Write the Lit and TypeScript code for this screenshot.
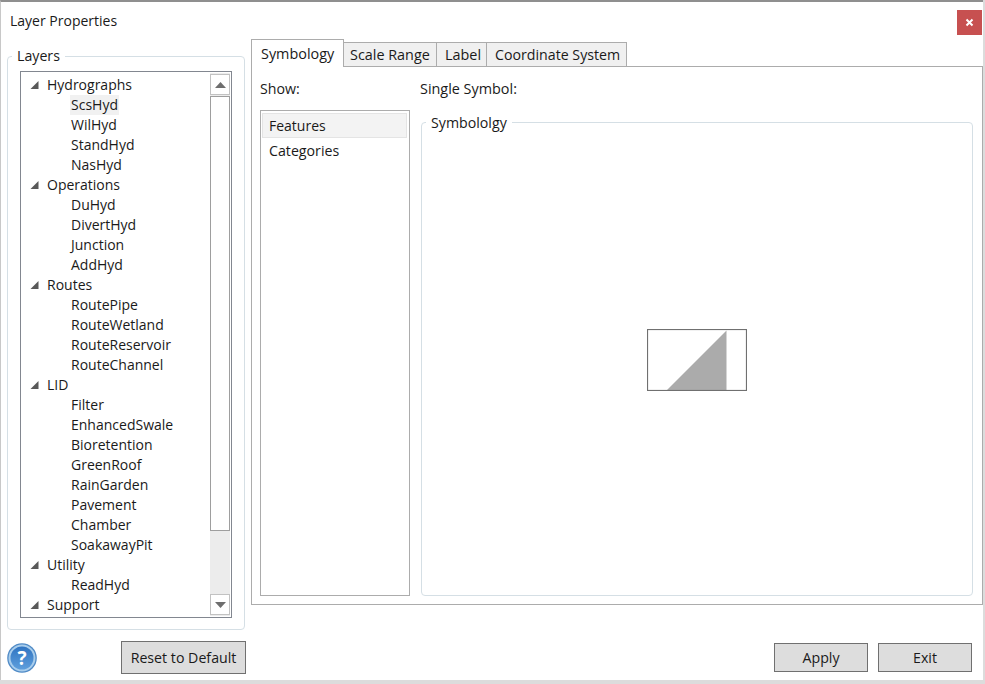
import { LitElement, html, css } from "lit";
import { customElement } from "lit/decorators.js";

const TREE: [string, string[]][] = [
  ["Hydrographs", ["ScsHyd", "WilHyd", "StandHyd", "NasHyd"]],
  ["Operations", ["DuHyd", "DivertHyd", "Junction", "AddHyd"]],
  ["Routes", ["RoutePipe", "RouteWetland", "RouteReservoir", "RouteChannel"]],
  ["LID", ["Filter", "EnhancedSwale", "Bioretention", "GreenRoof", "RainGarden", "Pavement", "Chamber", "SoakawayPit"]],
  ["Utility", ["ReadHyd"]],
  ["Support", []],
];

@customElement("app-root")
export class AppRoot extends LitElement {
  static styles = css`
    :host {
      display: block;
      width: 985px;
      height: 684px;
      overflow: hidden;
      background: #dcdcdc;
      font-family: "Open Sans", "Noto Sans", sans-serif;
      font-size: 14.2px;
      color: #1a1a1a;
    }
    * { box-sizing: border-box; }
    .win {
      width: 983px;
      height: 680px;
      background: #fff;
      border-top: 2px solid #8f8f8f;
      border-left: 1px solid #c8c8c8;
      display: flex;
      flex-direction: column;
    }
    .title {
      height: 38px;
      display: flex;
      justify-content: space-between;
      align-items: flex-start;
      padding-left: 9px;
      line-height: 20px;
      flex: none;
    }
    .title span { margin-top: 9px; font-size: 14px; }
    .close {
      width: 25px;
      height: 25px;
      margin-top: 8px;
      margin-right: 1px;
      background: #c75050;
      display: flex;
      align-items: center;
      justify-content: center;
    }
    .body {
      display: flex;
      height: 590px;
      flex: none;
    }
    fieldset {
      margin: 0;
      border: 1px solid #d5dfe5;
      border-radius: 4px;
      min-width: 0;
    }
    legend {
      padding: 0 5px;
      line-height: 20px;
      margin-left: 4px;
    }
    .layers {
      width: 238px;
      height: 584px;
      margin: 6px 0 0 6px;
      padding: 0 12px 11px 12px;
      flex: none;
    }
    .layers legend { margin-left: -8px; }
    .tree {
      height: 547px;
      border: 1px solid #828790;
      display: flex;
      padding: 1px;
      margin-top: 5px;
      font-size: 14px;
    }
    .items { flex: 1; padding: 2px 0 0 0; overflow: hidden; }
    .node {
      height: 20px;
      line-height: 20px;
      display: flex;
      align-items: center;
      padding-left: 8px;
    }
    .node .arrow {
      width: 9px; height: 9px; margin-right: 8px; flex: none; display: block;
    }
    .leaf { height: 20px; line-height: 20px; padding-left: 48px; }
    .leaf span { display: inline-block; padding: 0 1px; height: 20px; }
    .leaf.sel span { background: #f1f1f1; }
    .sb {
      width: 20px;
      background: #ececec;
      display: flex;
      flex-direction: column;
      flex: none;
      padding: 1px 0;
    }
    .sb-btn {
      height: 21px;
      background: #fff;
      border: 1px solid #c2c2c2;
      display: flex;
      align-items: center;
      justify-content: center;
      flex: none;
    }
    .thumb {
      height: 435px;
      background: #fff;
      border: 1px solid #9e9e9e;
      margin-top: 1px;
      flex: none;
    }
    .sb-fill { flex: 1; }
    .right {
      width: 732px;
      margin-left: 6px;
      margin-top: -1px;
      flex: none;
      display: flex;
      flex-direction: column;
    }
    .tabs { display: flex; height: 27px; flex: none; align-items: flex-start; font-size: 14.4px; }
    .tab {
      height: 24px;
      margin-top: 3px;
      background: #f0f0f0;
      border: 1px solid #acacac;
      border-left-width: 0;
      border-bottom-width: 0;
      line-height: 23px;
      flex: none;
      white-space: nowrap;
    }
    .tab.active {
      width: 93px;
      height: 28px;
      margin-top: 0;
      background: #fff;
      border-left-width: 1px;
      padding-left: 9px;
      line-height: 28px;
      position: relative;
      z-index: 1;
    }
    .tab.scale { width: 93px; padding-left: 6px; }
    .tab.label { width: 50px; padding-left: 8px; }
    .tab.coord { width: 140px; padding-left: 8px; font-size: 14.2px; }
    .panel {
      height: 539px;
      border: 1px solid #acacac;
      padding: 11px 8px 8px 8px;
      display: flex;
      flex-direction: column;
      flex: none;
    }
    .labels { display: flex; height: 22px; line-height: 22px; flex: none; }
    .labels .l1 { width: 160px; }
    .labels .l2 { font-size: 14.4px; }
    .content { display: flex; margin-top: 10px; flex: 1; min-height: 0; }
    .list {
      width: 150px;
      border: 1px solid #acacac;
      padding: 2px 2px 2px 1px;
      flex: none;
    }
    .li { height: 25px; line-height: 25px; padding-left: 7px; }
    .li.sel {
      background: #f3f3f3;
      border: 1px solid #e4e4e4;
      line-height: 23px;
      padding-left: 6px;
      font-size: 14px;
    }
    .sym {
      flex: 1;
      margin: 1px 1px 0 11px;
      padding: 0;
      display: flex;
      align-items: center;
      justify-content: center;
      min-width: 0;
    }
    .sym legend { padding-top: 2px; }
    .preview { display: block; margin-bottom: 9px; }
    .foot {
      flex: 1;
      display: flex;
      align-items: flex-start;
      padding-top: 11px;
    }
    .help { display: block; margin-left: 6px; margin-top: 2px; flex: none; }
    .btn {
      height: 33px;
      background: #dddddd;
      border: 1px solid #707070;
      font: inherit;
      color: inherit;
      padding: 0;
      text-align: center;
      flex: none;
    }
    .reset { width: 125px; margin-left: 84px; }
    .apply { width: 94px; margin-left: auto; margin-top: 2px; height: 29px; }
    .exit { width: 94px; margin-left: 10px; margin-right: 11px; margin-top: 2px; height: 29px; }
  `;

  render() {
    const arrow = html`<svg class="arrow" viewBox="0 0 9 9"><path d="M8.500 0V8H0.500Z" fill="#595959"/></svg>`;
    return html`
      <div class="win">
        <div class="title">
          <span>Layer Properties</span>
          <div class="close">
            <svg width="9" height="9" viewBox="0 0 9 9"><path d="M1.500 1.500L7.500 7.500M7.500 1.500L1.500 7.500" stroke="#fff" stroke-width="2"/></svg>
          </div>
        </div>
        <div class="body">
          <fieldset class="layers">
            <legend>Layers</legend>
            <div class="tree">
              <div class="items">
                ${TREE.map(([g, kids]) => html`
                  <div class="node">${arrow}<span>${g}</span></div>
                  ${kids.map((k) => html`<div class="leaf ${k === "ScsHyd" ? "sel" : ""}"><span>${k}</span></div>`)}
                `)}
              </div>
              <div class="sb">
                <div class="sb-btn"><svg width="11" height="6" viewBox="0 0 11 6"><path d="M5.500 0L11 6H0Z" fill="#6e6e6e"/></svg></div>
                <div class="thumb"></div>
                <div class="sb-fill"></div>
                <div class="sb-btn"><svg width="11" height="6" viewBox="0 0 11 6"><path d="M0 0H11L5.500 6Z" fill="#6e6e6e"/></svg></div>
              </div>
            </div>
          </fieldset>
          <div class="right">
            <div class="tabs">
              <div class="tab active">Symbology</div>
              <div class="tab scale">Scale Range</div>
              <div class="tab label">Label</div>
              <div class="tab coord">Coordinate System</div>
            </div>
            <div class="panel">
              <div class="labels"><span class="l1">Show:</span><span class="l2">Single Symbol:</span></div>
              <div class="content">
                <div class="list">
                  <div class="li sel">Features</div>
                  <div class="li">Categories</div>
                </div>
                <fieldset class="sym">
                  <legend>Symbololgy</legend>
                  <svg class="preview" width="100" height="62" viewBox="0 0 100 62">
                    <path d="M20 61L79.500 1.500V61Z" fill="#ababab"/>
                    <rect x="0.500" y="0.500" width="99" height="61" fill="none" stroke="#707070" stroke-width="1.200"/>
                  </svg>
                </fieldset>
              </div>
            </div>
          </div>
        </div>
        <div class="foot">
          <svg class="help" width="30" height="30" viewBox="0 0 30 30">
            <defs>
              <linearGradient id="h" x1="0" y1="0" x2="0" y2="1">
                <stop offset="0" stop-color="#2f74c2"/><stop offset="1" stop-color="#5f9fdc"/>
              </linearGradient>
            </defs>
            <circle cx="15" cy="15" r="14.800" fill="#4f8ac6"/>
            <circle cx="15" cy="15" r="13.500" fill="#a8cdec"/>
            <circle cx="15" cy="15" r="11.500" fill="url(#h)"/>
            <text x="15" y="21.500" text-anchor="middle" font-family="Open Sans" font-weight="700" font-size="19" fill="#fff">?</text>
          </svg>
          <button class="btn reset">Reset to Default</button>
          <button class="btn apply">Apply</button>
          <button class="btn exit">Exit</button>
        </div>
      </div>
    `;
  }
}
